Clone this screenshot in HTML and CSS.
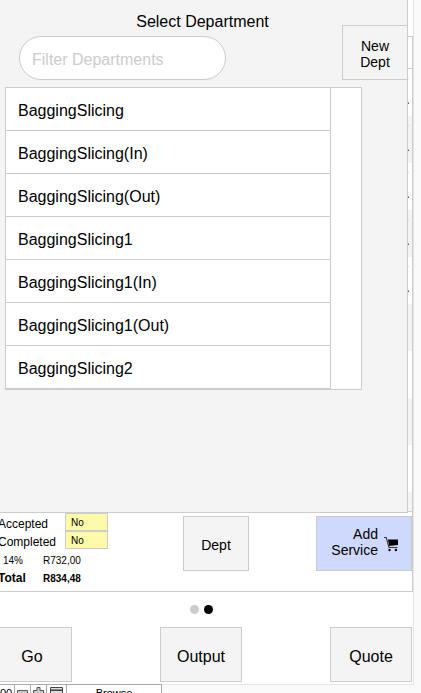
FILE: index.html
```html
<!DOCTYPE html>
<html>
<head>
    <meta charset="utf-8">
    <meta name="viewport" content="width=device-width, initial-scale=1.0">
    <title>Select Department</title>
    <link rel="stylesheet" href="styles.css">
</head>
<body>
    <div class="layout">
        <div class="portal">
            <div class="portal-head"></div>
            <div class="portal-row has-data"></div>
            <div class="portal-row has-data"></div>
            <div class="portal-row has-data"></div>
            <div class="portal-row has-data"></div>
            <div class="portal-row has-data"></div>
            <div class="portal-row"></div>
            <div class="portal-row"></div>
            <div class="portal-row"></div>
            <div class="portal-row"></div>
            <div class="portal-row"></div>
        </div>

        <div class="summary">
            <div class="totals">
                <div class="status"><span class="label">Accepted</span><span class="flag">No</span></div>
                <div class="status"><span class="label">Completed</span><span class="flag">No</span></div>
                <div class="amount"><span class="rate">14%</span><span>R732,00</span></div>
                <div class="amount total"><span class="label">Total</span><span>R834,48</span></div>
            </div>
            <button class="btn small dept">Dept</button>
            <button class="btn small service">
                <span>Add<br>Service</span>
                <svg class="cart" width="16" height="16" viewBox="0 0 16 16">
                    <path d="M1 1.5H3.2L6 11.5H14.5" fill="none" stroke="#333" stroke-width="1.1"/>
                    <path d="M5 3.5H15V9L6.2 10Z" fill="#000"/>
                    <circle cx="6.5" cy="14" r="1.2"/>
                    <circle cx="12.9" cy="14" r="1.2"/>
                </svg>
            </button>
        </div>

        <div class="dots">
            <span class="dot"></span>
            <span class="dot active"></span>
        </div>

        <div class="actions">
            <button class="btn go">Go</button>
            <button class="btn">Output</button>
            <button class="btn">Quote</button>
        </div>
    </div>

    <div class="statusbar">
        <span class="zoom">00</span>
        <span class="tool">
            <svg width="11" height="9" viewBox="0 0 11 9"><path d="M.5 5.5H10.5V9H.5Z" fill="#ccc" stroke="#555"/></svg>
        </span>
        <span class="tool">
            <svg width="11" height="9" viewBox="0 0 11 9"><path d="M4 9V8.5H.5V5.5H4V2.5H7V5.5H10.5V8.5H7V9" fill="#ccc" stroke="#555"/></svg>
        </span>
        <span class="tool wide">
            <svg width="13" height="9" viewBox="0 0 13 9"><path d="M.5 9V2.5H12.5V9" fill="#ddd" stroke="#444"/><path d="M1 4.5H12" stroke="#888" stroke-width="1"/><path d="M1 5.5H12" stroke="#444" stroke-width="1"/></svg>
        </span>
        <span class="mode">Browse</span>
    </div>

    <div class="popover">
        <h1>Select Department</h1>
        <div class="search">
            <input class="filter" type="text" placeholder="Filter Departments">
            <button class="btn small new-dept">New<br>Dept</button>
        </div>
        <div class="list">
            <ul>
                <li>BaggingSlicing</li>
                <li>BaggingSlicing(In)</li>
                <li>BaggingSlicing(Out)</li>
                <li>BaggingSlicing1</li>
                <li>BaggingSlicing1(In)</li>
                <li>BaggingSlicing1(Out)</li>
                <li>BaggingSlicing2</li>
            </ul>
        </div>
    </div>
</body>
</html>
```
FILE: styles.css
```css
* {
    box-sizing: border-box;
}
body {
    margin: 0;
    height: 693px;
    overflow: hidden;
    position: relative;
    font-family: "Liberation Sans", Arial, sans-serif;
    font-size: 16px;
    color: #000;
    background-color: #fafafa;
}
.layout {
    width: 414px;
    height: 685px;
    padding-top: 36px;
    background-color: #fff;
    border-right: 1px solid #e6e6e6;
    border-bottom: 1px solid #e6e6e6;
}
.btn {
    height: 55px;
    padding: 0;
    font: inherit;
    line-height: 18px;
    color: #000;
    background-color: #f4f4f4;
    border: 1px solid #ccc;
    border-radius: 0;
}
.small {
    font-size: 14px;
    line-height: 16px;
}

/* line items behind the popover */
.portal {
    height: 476px;
    overflow: hidden;
    border: 1px solid #ccc;
    border-left: none;
}
.portal-head {
    height: 32px;
    border-bottom: 1px solid #ccc;
}
.portal-row {
    height: 47px;
    padding: 9px 3px 0 0;
}
.portal-row:nth-child(odd) {
    background-color: #f4f4f4;
}
.has-data::before,
.has-data::after {
    content: "";
    display: block;
    width: 1px;
    height: 1px;
    margin-left: auto;
    background-color: #ddd;
}
.has-data::after {
    height: 2px;
    margin-top: 23px;
    background: linear-gradient(#dfa0b8 50%, #d8204c 50%);
}

/* totals and service buttons */
.summary {
    display: flex;
    height: 80px;
    border-right: 1px solid #ccc;
    border-bottom: 1px solid #ccc;
}
.totals {
    width: 183px;
    padding-top: 1px;
}
.status {
    display: flex;
    height: 18px;
    font-size: 12px;
    line-height: 23px;
}
.status .label {
    width: 67px;
    margin-left: -2px;
}
.flag {
    width: 43px;
    padding-left: 5px;
    font-size: 10px;
    line-height: 17px;
    background-color: #fdfaaa;
    border: 1px solid #ccc;
}
.amount {
    display: flex;
    font-size: 10px;
    line-height: 17px;
    padding-top: 3px;
    height: 20px;
}
.rate {
    width: 43px;
    padding-left: 3px;
}
.total {
    height: 18px;
    padding-top: 1px;
    font-weight: bold;
}
.total .label {
    width: 45px;
    margin-left: -2px;
    font-size: 12px;
}
.dept {
    width: 66px;
    margin-top: 4px;
    padding-top: 2px;
}
.service {
    display: flex;
    align-items: center;
    justify-content: flex-end;
    gap: 5px;
    width: 96px;
    margin: 4px 0 0 auto;
    padding-right: 12px;
    text-align: right;
    background-color: #cfd9fd;
}
.service span {
    padding-bottom: 4px;
}

.dots {
    display: flex;
    gap: 5px;
    padding: 13px 0 0 190px;
    height: 35px;
}
.dot {
    width: 9px;
    height: 9px;
    border-radius: 50%;
    background-color: #ccc;
}
.active {
    background-color: #000;
}

.actions {
    display: flex;
    justify-content: space-between;
    margin: 0 1px 0 -10px;
}
.actions .btn {
    width: 82px;
    padding-top: 5px;
}
.actions .go {
    padding-left: 2px;
}

.statusbar {
    display: flex;
    width: 162px;
    height: 9px;
    margin-top: -1px;
    overflow: hidden;
    font-size: 11px;
    line-height: 16px;
    background-color: #fff;
    border-top: 1px solid #aaa;
}
.statusbar span {
    border-right: 1px solid #aaa;
}
.zoom {
    width: 15px;
}
.tool {
    width: 16px;
    text-align: center;
    line-height: 0;
}
.wide {
    width: 20px;
}
.mode {
    flex: 1;
    text-align: center;
}

/* department picker */
.popover {
    position: absolute;
    top: 0;
    left: 0;
    width: 408px;
    height: 513px;
    background-color: #f4f4f4;
    border-right: 1px solid #ccc;
    border-bottom: 1px solid #ccc;
}
.popover h1 {
    margin: 0;
    padding: 12px 2px 0 0;
    height: 25px;
    font-size: 16px;
    font-weight: normal;
    line-height: 19px;
    text-align: center;
}
.search {
    display: flex;
    justify-content: space-between;
    height: 62px;
    padding-left: 19px;
}
.filter {
    width: 207px;
    height: 44px;
    margin-top: 11px;
    padding: 4px 12px 0;
    font: inherit;
    background-color: #fff;
    border: 1px solid #ccc;
    border-radius: 22px;
}
.filter::placeholder {
    color: #ccc;
}
.new-dept {
    width: 66px;
    padding-top: 3px;
    margin-right: -1px;
}
.list {
    width: 357px;
    height: 303px;
    margin-left: 5px;
    background-color: #fff;
    border: 1px solid #ccc;
}
.list ul {
    width: 325px;
    margin: 0;
    padding: 0;
    list-style: none;
    border-right: 1px solid #ccc;
}
.list li {
    height: 43px;
    padding-left: 12px;
    line-height: 45px;
    border-bottom: 1px solid #ccc;
}
```
